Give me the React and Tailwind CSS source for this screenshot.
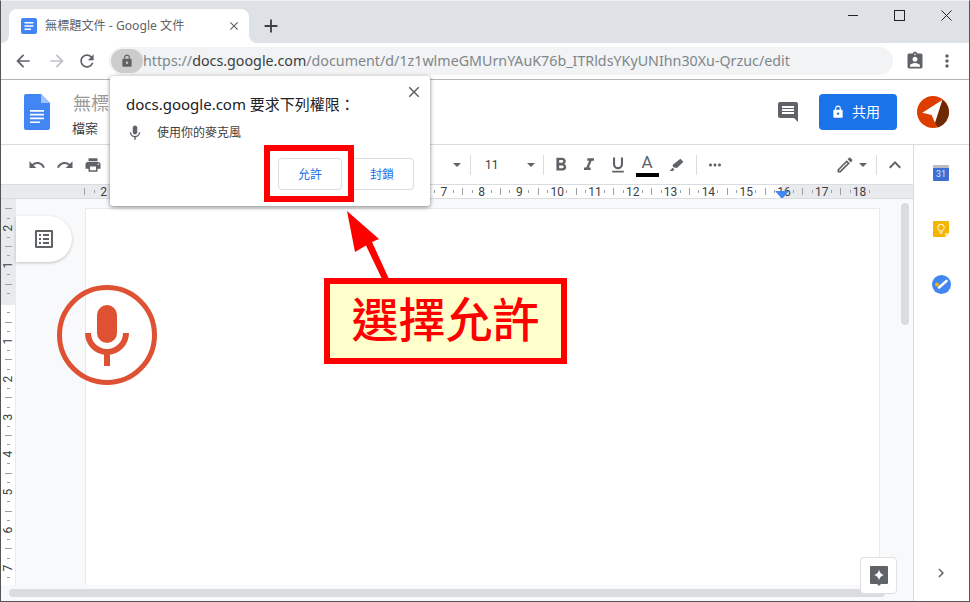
import React from "react";

const gray = "#5f6368";

const Icon = ({ d, size = 18, color = gray, className = "" }) => (
  <svg width={size} height={size} viewBox="0 0 24 24" fill={color} className={className}>
    <path d={d} />
  </svg>
);

const paths = {
  back: "M20 11H7.83l5.59-5.59L12 4l-8 8 8 8 1.41-1.41L7.83 13H20v-2z",
  forward: "M12 4l-1.41 1.41L16.17 11H4v2h12.17l-5.58 5.59L12 20l8-8z",
  reload:
    "M17.65 6.35C16.2 4.9 14.21 4 12 4c-4.42 0-7.99 3.58-7.99 8s3.57 8 7.99 8c3.73 0 6.84-2.55 7.73-6h-2.08c-.82 2.33-3.04 4-5.65 4-3.31 0-6-2.69-6-6s2.69-6 6-6c1.66 0 3.14.69 4.22 1.78L13 11h7V4l-2.35 2.35z",
  lock: "M18 8h-1V6c0-2.76-2.24-5-5-5S7 3.24 7 6v2H6c-1.1 0-2 .9-2 2v10c0 1.1.9 2 2 2h12c1.1 0 2-.9 2-2V10c0-1.1-.9-2-2-2zm-6 9c-1.1 0-2-.9-2-2s.9-2 2-2 2 .9 2 2-.9 2-2 2zm3.1-9H8.9V6c0-1.71 1.39-3.1 3.1-3.1 1.71 0 3.1 1.39 3.1 3.1v2z",
  assignment:
    "M19 3h-4.18C14.4 1.84 13.3 1 12 1c-1.3 0-2.4.84-2.82 2H5c-1.1 0-2 .9-2 2v14c0 1.1.9 2 2 2h14c1.1 0 2-.9 2-2V5c0-1.1-.9-2-2-2zm-7 0c.55 0 1 .45 1 1s-.45 1-1 1-1-.45-1-1 .45-1 1-1zm0 4c1.66 0 3 1.34 3 3s-1.34 3-3 3-3-1.34-3-3 1.34-3 3-3zm6 12H6v-1.4c0-2 4-3.1 6-3.1s6 1.1 6 3.1V19z",
  dots: "M12 8c1.1 0 2-.9 2-2s-.9-2-2-2-2 .9-2 2 .9 2 2 2zm0 2c-1.1 0-2 .9-2 2s.9 2 2 2 2-.9 2-2-.9-2-2-2zm0 6c-1.1 0-2 .9-2 2s.9 2 2 2 2-.9 2-2-.9-2-2-2z",
  close: "M19 6.41L17.59 5 12 10.59 6.41 5 5 6.41 10.59 12 5 17.59 6.41 19 12 13.41 17.59 19 19 17.59 13.41 12z",
  plus: "M19 13h-6v6h-2v-6H5v-2h6V5h2v6h6v2z",
  mic: "M12 14c1.66 0 3-1.34 3-3V5c0-1.66-1.34-3-3-3S9 3.34 9 5v6c0 1.66 1.34 3 3 3zm5.3-3c0 3-2.54 5.1-5.3 5.1S6.7 14 6.7 11H5c0 3.41 2.72 6.23 6 6.72V21h2v-3.28c3.28-.48 6-3.3 6-6.72h-1.7z",
  comment:
    "M21.99 4c0-1.1-.89-2-1.99-2H4c-1.1 0-2 .9-2 2v12c0 1.1.9 2 2 2h14l4 4-.01-18zM18 14H6v-2h12v2zm0-3H6V9h12v2zm0-3H6V6h12v2z",
  undo: "M12.5 8c-2.65 0-5.05.99-6.9 2.6L2 7v9h9l-3.62-3.62c1.39-1.16 3.16-1.88 5.12-1.88 3.54 0 6.55 2.31 7.6 5.5l2.37-.78C21.08 11.03 17.15 8 12.5 8z",
  redo: "M18.4 10.6C16.55 8.99 14.15 8 11.5 8c-4.65 0-8.58 3.03-9.96 7.22L3.9 16c1.05-3.19 4.05-5.5 7.6-5.5 1.95 0 3.73.72 5.12 1.88L13 16h9V7l-3.6 3.6z",
  print:
    "M19 8H5c-1.66 0-3 1.34-3 3v6h4v4h12v-4h4v-6c0-1.66-1.34-3-3-3zm-3 11H8v-5h8v5zm3-7c-.55 0-1-.45-1-1s.45-1 1-1 1 .45 1 1-.45 1-1 1zm-1-9H6v4h12V3z",
  bold: "M15.6 10.79c.97-.67 1.65-1.77 1.65-2.79 0-2.26-1.75-4-4-4H7v14h7.04c2.09 0 3.71-1.7 3.71-3.79 0-1.52-.86-2.82-2.15-3.42zM10 6.5h3c.83 0 1.5.67 1.5 1.5s-.67 1.5-1.5 1.5h-3v-3zm3.5 9H10v-3h3.5c.83 0 1.5.67 1.5 1.5s-.67 1.5-1.5 1.5z",
  italic: "M10 4v3h2.21l-3.42 8H6v3h8v-3h-2.21l3.42-8H18V4z",
  underline: "M12 17c3.31 0 6-2.69 6-6V3h-2.5v8c0 1.93-1.57 3.5-3.5 3.5S8.5 12.93 8.5 11V3H6v8c0 3.31 2.69 6 6 6zm-7 2v2h14v-2H5z",
  marker: "M16.5 3.5l4 4-8.5 8.5-5-1-1-3zM6 15.5l2.5 2.5-2 2H2.5z",
  more: "M6 10c-1.1 0-2 .9-2 2s.9 2 2 2 2-.9 2-2-.9-2-2-2zm12 0c-1.1 0-2 .9-2 2s.9 2 2 2 2-.9 2-2-.9-2-2-2zm-6 0c-1.1 0-2 .9-2 2s.9 2 2 2 2-.9 2-2-.9-2-2-2z",
  pencil:
    "M14.06 9.02l.92.92L5.92 19H5v-.92l9.06-9.06M17.66 3c-.25 0-.51.1-.7.29l-1.83 1.83 3.75 3.75 1.83-1.83c.39-.39.39-1.02 0-1.41l-2.34-2.34c-.2-.2-.45-.29-.71-.29zm-3.6 3.19L3 17.25V21h3.75L17.81 9.94l-3.75-3.75z",
  up: "M12 8l-6 6 1.41 1.41L12 10.83l4.59 4.58L18 14z",
  outline:
    "M19 5v14H5V5h14m1.1-2H3.9c-.5 0-.9.4-.9.9v16.2c0 .4.4.9.9.9h16.2c.4 0 .9-.5.9-.9V3.9c0-.5-.5-.9-.9-.9zM11 7h6v2h-6V7zm0 4h6v2h-6v-2zm0 4h6v2h-6zM7 7h2v2H7zm0 4h2v2H7zm0 4h2v2H7z",
  right: "M10 6L8.59 7.41 13.17 12l-4.58 4.59L10 18l6-6z",
};

const ToolBtn = ({ d, className = "", size = 18 }) => (
  <div className={`w-7 h-7 flex items-center justify-center shrink-0 ${className}`}>
    <Icon d={d} size={size} />
  </div>
);

const Caret = ({ className = "" }) => (
  <svg width="14" height="14" viewBox="0 0 14 14" className={`shrink-0 ${className}`}>
    <path d="M3 5h8l-4 4z" fill={gray} />
  </svg>
);

const Sep = ({ className = "" }) => <div className={`w-px h-5 bg-[#dadce0] shrink-0 ${className}`} />;

const hNumbers = ["2", "1", "", "1", "2", "3", "4", "5", "6", "7", "8", "9", "10", "11", "12", "13", "14", "15", "16", "17", "18"];
const vNumbers = ["2", "1", "", "1", "2", "3", "4", "5", "6", "7"];

const HorizontalRuler = () => (
  <div className="relative h-[14px] shrink-0 border-b border-[#dadce0] flex pl-[79px] overflow-hidden bg-[linear-gradient(to_right,#e8eaed_177px,#ffffff_177px,#ffffff_781px,#e8eaed_781px)]">
    {hNumbers.map((n, i) => (
      <div key={i} className="w-[37.8px] h-[13px] shrink-0 grid grid-cols-4 items-center justify-items-center">
        <span className="w-px h-[7px] bg-[#9aa0a6]" />
        <span className="w-px h-[3px] bg-[#9aa0a6]" />
        <span className="text-[12px] leading-none text-[#3c4043] font-['Roboto',sans-serif]">{n}</span>
        <span className="w-px h-[3px] bg-[#9aa0a6]" />
      </div>
    ))}
    <svg width="14" height="8" viewBox="0 0 14 8" className="absolute left-[774px] top-[6px]">
      <path d="M0 0h14L7 8z" fill="#4285f4" />
    </svg>
  </div>
);

const VerticalRuler = () => (
  <div className="w-[15px] shrink-0 pt-[5px] overflow-hidden border-r border-[#e8eaed] bg-[linear-gradient(to_bottom,#e8eaed_106px,#ffffff_106px)]">
    {vNumbers.map((n, i) => (
      <div key={i} className="h-[37.8px] w-[14px] grid grid-rows-4 items-center justify-items-center">
        <span className="h-px w-[7px] bg-[#9aa0a6]" />
        <span className="h-px w-[3px] bg-[#9aa0a6]" />
        <span className="text-[12px] leading-none text-[#3c4043] -rotate-90 font-['Roboto',sans-serif]">{n}</span>
        <span className="h-px w-[3px] bg-[#9aa0a6]" />
      </div>
    ))}
  </div>
);

const App = () => {
  return (
    <div className="relative w-[970px] h-[602px] overflow-hidden flex flex-col bg-white border border-[#555555] border-t-[#eeeeee] font-['Noto_Sans','Noto_Sans_CJK_TC',sans-serif]">
      {/* Tab strip */}
      <div className="h-[42px] shrink-0 bg-[#dee1e6] flex items-end pl-2 relative">
        <div className="relative w-[240px] h-[34px] bg-white rounded-t-lg flex items-center pl-3 pr-2">
          <div className="absolute -left-2 bottom-0 w-2 h-2 bg-white">
            <div className="w-2 h-2 bg-[#dee1e6] rounded-br-lg" />
          </div>
          <div className="absolute -right-2 bottom-0 w-2 h-2 bg-white">
            <div className="w-2 h-2 bg-[#dee1e6] rounded-bl-lg" />
          </div>
          <svg width="16" height="16" viewBox="0 0 16 16" className="shrink-0">
            <rect width="16" height="16" rx="2" fill="#4285f4" />
            <path d="M3.5 4h9v1.6h-9zM3.5 7.2h9v1.6h-9zM3.5 10.4h6.5V12H3.5z" fill="#fff" />
          </svg>
          <span className="ml-2 mt-px text-[12.15px] text-[#5f6368] whitespace-nowrap">無標題文件 - Google 文件</span>
          <Icon d={paths.close} size={14} className="ml-auto" />
        </div>
        <Icon d={paths.plus} size={22} color="#3c4043" className="ml-[11px] mb-[6px]" />
        <div className="ml-auto self-start flex items-center h-[28px] pr-[17px] gap-[36px]">
          <svg width="10" height="10" viewBox="0 0 10 10"><path d="M0 5.5h10" stroke="#222" /></svg>
          <svg width="11" height="11" viewBox="0 0 11 11"><rect x=".5" y=".5" width="10" height="10" fill="none" stroke="#222" /></svg>
          <svg width="11" height="11" viewBox="0 0 11 11"><path d="M.5.5l10 10M10.5.5l-10 10" stroke="#222" /></svg>
        </div>
      </div>

      {/* Address bar */}
      <div className="h-[37px] shrink-0 bg-white border-b border-[#b4b4b4] flex items-center pl-[12px]">
        <Icon d={paths.back} size={20} />
        <Icon d={paths.forward} size={20} color="#bdc1c6" className="ml-[14px]" />
        <Icon d={paths.reload} size={20} className="ml-[10px]" />
        <div className="ml-[12px] w-[784px] h-[28px] bg-[#f1f3f4] rounded-full flex items-center pl-[2px]">
          <div className="w-[32px] h-[24px] bg-[#cccccc] rounded-full flex items-center justify-center">
            <Icon d={paths.lock} size={14} />
          </div>
          <span className="text-[14.27px] text-[#80868b] whitespace-nowrap">
            https://<span className="text-[#3c4043]">docs.google.com</span>/document/d/1z1wlmeGMUrnYAuK76b_ITRldsYKyUNIhn30Xu-Qrzuc/edit
          </span>
        </div>
        <Icon d={paths.assignment} size={20} className="ml-[12px]" />
        <Icon d={paths.dots} size={20} className="ml-[12px]" />
      </div>

      {/* Docs header */}
      <div className="h-[65px] shrink-0 border-b border-[#dadce0] flex items-center pl-[23px] pb-[1px]">
        <svg width="26" height="36" viewBox="0 0 26 36" className="shrink-0">
          <path d="M2 0h15l9 9v25a2 2 0 0 1-2 2H2a2 2 0 0 1-2-2V2a2 2 0 0 1 2-2z" fill="#4285f4" />
          <path d="M17 0l9 9h-9z" fill="#a1c2fa" />
          <path d="M6 16h14v1.7H6zM6 19.8h14v1.7H6zM6 23.6h14v1.7H6zM6 27.4h10v1.7H6z" fill="#fff" />
        </svg>
        <div className="ml-[23px] flex flex-col pt-[5px]">
          <span className="text-[18px] leading-[24px] text-[#999999] whitespace-nowrap">無標</span>
          <span className="text-[13px] leading-[18px] mt-[4px] text-[#3c4043] -ml-px">檔案</span>
        </div>
        <Icon d={paths.comment} size={24} className="ml-auto" />
        <div className="ml-[19px] w-[78px] h-[36px] bg-[#1a73e8] rounded flex items-center pl-[12px]">
          <Icon d={paths.lock} size={14} color="#fff" />
          <span className="ml-[7px] text-[14px] text-white">共用</span>
        </div>
        <svg width="32" height="32" viewBox="0 0 32 32" className="ml-[20px] mr-[20px] shrink-0">
          <circle cx="16" cy="16" r="16" fill="#dd3e00" />
          <path d="M25.3 4L18 26.7 21 31.5A16 16 0 0 0 32 16 16 16 0 0 0 29 7z" fill="#6d2a05" />
          <path d="M25.3 4L5.3 16.7 14.6 19 18 26.7z" fill="#fff" />
        </svg>
      </div>

      {/* Toolbar, rulers and page, side panel */}
      <div className="flex-1 flex min-h-0">
        <div className="w-[912px] shrink-0 flex flex-col">
          <div className="h-[40px] shrink-0 border-b border-[#dadce0] flex items-center pl-[22px]">
            <ToolBtn d={paths.undo} />
            <ToolBtn d={paths.redo} />
            <ToolBtn d={paths.print} />
            <Caret className="ml-[343px]" />
            <Sep className="ml-[6px]" />
            <span className="ml-[14px] w-[14px] text-[12px] text-[#3c4043] font-['Roboto',sans-serif]">11</span>
            <Caret className="ml-[25px]" />
            <Sep className="ml-[5px]" />
            <ToolBtn d={paths.bold} className="ml-[3px]" size={22} />
            <ToolBtn d={paths.italic} size={20} />
            <ToolBtn d={paths.underline} className="ml-px" size={20} />
            <div className="ml-px w-7 h-7 flex flex-col items-center shrink-0">
              <span className="text-[17px] leading-[22px] text-[#5f6368] font-['Roboto',sans-serif]">A</span>
              <div className="w-[23px] h-[4px] bg-black" />
            </div>
            <ToolBtn d={paths.marker} className="ml-[2px]" />
            <Sep className="ml-[5px]" />
            <ToolBtn d={paths.more} className="ml-[4px]" />
            <ToolBtn d={paths.pencil} className="ml-[102px]" size={20} />
            <Caret className="-ml-[3px]" />
            <Sep className="ml-[6px]" />
            <ToolBtn d={paths.up} className="ml-[4px]" size={24} />
          </div>

          <HorizontalRuler />

          <div className="flex-1 flex flex-col bg-[#f8f9fa] min-h-0">
            <div className="h-[386px] shrink-0 flex">
              <VerticalRuler />
              <div className="flex-1 flex pl-[69px] pt-[9px]">
                <div className="w-[795px] h-[377px] bg-white border-x border-t border-[#e8eaed]" />
                <div className="ml-[21px] mt-[-5px] w-2 h-[122px] rounded-full bg-[#dadce0]" />
              </div>
            </div>
            <div className="ml-[8px] mt-[4px] w-[876px] h-[8px] rounded-full bg-[#dadce0]" />
          </div>
        </div>

        <div className="flex-1 border-l border-[#dadce0] flex flex-col items-center pt-[20px] pr-px">
          <div className="w-4 h-4 rounded-[1px] bg-[#3d6fd6] border-t-[3px] border-[#b8bcc4] flex items-center justify-center">
            <span className="text-[9px] leading-none text-[#d8e4fb] font-['Roboto',sans-serif]">31</span>
          </div>
          <svg width="16" height="16" viewBox="0 0 16 16" className="mt-10">
            <path d="M1 0h14a1 1 0 0 1 1 1v11l-4 4H1a1 1 0 0 1-1-1V1a1 1 0 0 1 1-1z" fill="#f4b400" />
            <path d="M16 12l-4 4v-4z" fill="#fbe3a0" />
            <path d="M6.5 12h3M6.3 10V9C5.2 8.3 4.8 7.4 4.8 6.4a3.2 3.2 0 0 1 6.4 0c0 1-.4 1.9-1.5 2.6v1z" fill="none" stroke="#fff" strokeWidth="1" />
          </svg>
          <svg width="19" height="19" viewBox="0 0 19 19" className="mt-[38px]">
            <circle cx="9.5" cy="9.5" r="9.5" fill="#4285f4" />
            <path d="M7 12.5L14.5 6" stroke="#fff" strokeWidth="2.6" strokeLinecap="round" />
            <circle cx="5" cy="9.5" r="2" fill="#f4b400" />
          </svg>
          <Icon d={paths.right} size={18} className="mt-[270px]" />
        </div>
      </div>

      {/* Outline pill */}
      <div className="absolute left-[15px] top-[215px] w-[56px] h-[46px] bg-white rounded-r-full shadow-[0_1px_3px_rgba(60,64,67,0.3)] flex items-center justify-center">
        <Icon d={paths.outline} size={24} />
      </div>

      {/* Mic mark */}
      <svg width="100" height="100" viewBox="0 0 100 100" className="absolute left-[56px] top-[284px]">
        <circle cx="50" cy="50" r="47.5" fill="none" stroke="#de5233" strokeWidth="5" />
        <rect x="40" y="20" width="20" height="38" rx="10" fill="#de5233" />
        <path d="M31 48a19 19 0 0 0 38 0" fill="none" stroke="#de5233" strokeWidth="6" />
        <rect x="47" y="68" width="6" height="13" fill="#de5233" />
      </svg>

      {/* Explore button */}
      <div className="absolute left-[859px] top-[556px] w-[37px] h-[37px] bg-white border border-[#e0e0e0] rounded flex items-center justify-center">
        <svg width="18" height="20" viewBox="0 0 18 20">
          <path d="M1 0h16a1 1 0 0 1 1 1v16a1 1 0 0 1-1 1h-6l-2 2-2-2H1a1 1 0 0 1-1-1V1a1 1 0 0 1 1-1z" fill="#5f6368" />
          <path d="M9 3.5c.5 3 2 4.8 5 5.5-3 .7-4.500 2.500-5 5.500-.5-3-2-4.800-5-5.500 3-.7 4.500-2.500 5-5.500z" fill="#fff" />
        </svg>
      </div>

      {/* Permission popup */}
      <div className="absolute left-[109px] top-[75px] w-[320px] h-[130px] bg-white rounded-[3px] shadow-[0_1px_4px_rgba(0,0,0,0.5)] flex flex-col pl-[16px] pr-[16px] pt-[18px]">
        <Icon d={paths.close} size={18} color="#5f6368" className="absolute right-[7px] top-[7px]" />
        <div className="text-[15px] leading-[20px] text-[#202124] whitespace-nowrap">docs.google.com 要求下列權限：</div>
        <div className="flex items-center mt-[9px] h-[20px]">
          <Icon d={paths.mic} size={18} />
          <span className="ml-[13px] text-[12px] text-[#3c4043] whitespace-nowrap">使用你的麥克風</span>
        </div>
        <div className="flex justify-end gap-[8px] mt-[15px]">
          <div className="w-[64px] h-[32px] border border-[#dadce0] rounded-[4px] flex items-center justify-center pt-px text-[12px] text-[#1a73e8]">允許</div>
          <div className="w-[64px] h-[32px] border border-[#dadce0] rounded-[4px] flex items-center justify-center pt-px text-[12px] text-[#1a73e8]">封鎖</div>
        </div>
      </div>

      {/* Red annotation */}
      <div className="absolute left-[263px] top-[144px] w-[90px] h-[57px] border-[6px] border-[#ff0000]" />
      <svg width="60" height="75" viewBox="0 0 60 75" className="absolute left-[339px] top-[205px]">
        <path d="M7 5L15 46 26 39.500 42 73 49 73 32 36 39 33z" fill="#ff0000" />
      </svg>
      <div className="absolute left-[323px] top-[277px] w-[243px] h-[86px] border-[6px] border-[#ff0000] bg-[#ffffcc] flex items-center justify-center pb-[10px]">
        <span className="text-[47px] leading-none font-medium text-[#ff0000] whitespace-nowrap font-['Noto_Sans_CJK_TC',sans-serif]">選擇允許</span>
      </div>
    </div>
  );
};

export default App;
